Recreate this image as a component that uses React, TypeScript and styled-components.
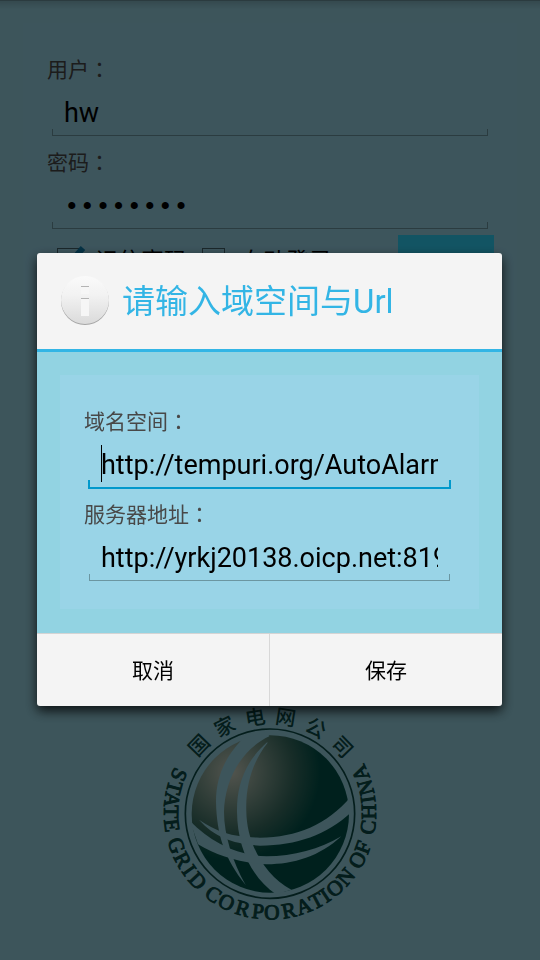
import React from "react";
import styled, { createGlobalStyle } from "styled-components";

const GlobalStyle = createGlobalStyle`
  * { box-sizing: border-box; }
  body {
    margin: 0;
    background: #98d4e3;
    font-family: Roboto, "Noto Sans CJK SC", sans-serif;
    color: #000;
  }
`;

const Page = styled.main`
  display: flex;
  flex-direction: column;
  min-height: 100vh;
  padding: 22px 23px 25px;
  border-top: 1px solid #6b939e;
  background: linear-gradient(#83b6c3, #98d4e3 8px);
`;

const Panel = styled.section`
  padding: 33px 24px 15px;
  background: #99d4e7;
`;

const Field = styled.div`
  margin-bottom: 12px;
`;

const Label = styled.label`
  display: block;
  padding-bottom: 4px;
  font-family: "Noto Sans CJK SC", sans-serif;
  font-size: 21px;
  line-height: 24px;
  color: #484848;
`;

const Colon = styled.span`
  font-family: "Noto Sans CJK TC", sans-serif;
`;

const InputBox = styled.div<{ $active?: boolean }>`
  position: relative;
  height: 53px;
  margin: 0 4px;
  &::after {
    content: "";
    position: absolute;
    inset: auto ${(p) => (p.$active ? "0 0 0" : "1px 1px 1px")};
    height: ${(p) => (p.$active ? 7 : 6)}px;
    border: solid ${(p) => (p.$active ? "#0099cc" : "#6b96a1")};
    border-width: ${(p) => (p.$active ? "0 2px 2px" : "0 1px 1px")};
    pointer-events: none;
  }
`;

const TextInput = styled.input`
  display: block;
  width: 100%;
  height: 100%;
  padding: 5px 13px 0;
  border: 0;
  outline: 0;
  background: transparent;
  color: #000;
  font-family: inherit;
  font-size: 27px;
  &[type="password"] {
    padding-top: 7px;
    font-family: "Liberation Mono", monospace;
    font-size: 26px;
  }
`;

const Caret = styled.span`
  position: absolute;
  left: 13px;
  top: 9px;
  width: 1px;
  height: 37px;
  background: #000;
`;

const Options = styled.div`
  display: flex;
  align-items: flex-start;
  height: 80px;
  margin-top: -7px;
  padding-left: 10px;
`;

const Option = styled.label`
  display: flex;
  align-items: center;
  gap: 15px;
  width: 145px;
  margin-top: 7px;
  font-family: "Noto Sans CJK SC", sans-serif;
  font-size: 23px;
  line-height: 34px;
  white-space: nowrap;
`;

const CheckSlot = styled.span`
  position: relative;
  display: block;
  width: 23px;
  height: 23px;
`;

const Check = styled.input`
  appearance: none;
  display: block;
  width: 23px;
  height: 23px;
  margin: 0;
  border: 1px solid #44626a;
`;

const Tick = styled.svg`
  position: absolute;
  left: 2px;
  top: -4px;
  pointer-events: none;
`;

const LoginButton = styled.button`
  width: 96px;
  height: 68px;
  margin-left: auto;
  margin-right: -1px;
  border: 0;
  background: #2fd2f7;
  color: #fff;
  font: inherit;
  font-size: 21px;
`;

const LogoArea = styled.div`
  display: flex;
  justify-content: center;
  margin-top: auto;
`;

const Scrim = styled.div`
  position: fixed;
  inset: 0;
  display: flex;
  align-items: center;
  padding: 0 38px 1px 37px;
  background: rgba(0, 0, 0, 0.6);
`;

const Dialog = styled.div`
  flex: 1;
  min-width: 0;
  overflow: hidden;
  border-radius: 3px;
  background: #f4f4f4;
  box-shadow: 0 5px 12px 0 rgba(0, 0, 0, 0.8);
`;

const DialogHeader = styled.header`
  display: flex;
  align-items: center;
  gap: 12px;
  height: 99px;
  padding-left: 23px;
  border-bottom: 3px solid #33b5e5;
`;

const Title = styled.h1`
  margin: 0;
  padding-top: 2px;
  font-size: 33px;
  font-weight: 400;
  line-height: 48px;
  color: #33b5e5;
`;

const DialogBody = styled.div`
  padding: 23px 23px 24px;
  background: #92d3e2;
`;

const Actions = styled.footer`
  display: flex;
  border-top: 1px solid #d4d4d4;
`;

const ActionButton = styled.button`
  flex: 1;
  height: 72px;
  padding: 0 0 2px;
  border: 0;
  background: transparent;
  color: #000;
  font-family: "Noto Sans CJK SC", sans-serif;
  font-size: 21px;
  & + & {
    border-left: 1px solid #d8d8d8;
  }
`;

type FieldProps = {
  id: string;
  label: string;
  value: string;
  type?: string;
  active?: boolean;
};

function TextField({ id, label, value, type = "text", active }: FieldProps) {
  return (
    <Field>
      <Label htmlFor={id}>
        {label}
        <Colon lang="zh-TW">{"\uFF1A"}</Colon>
      </Label>
      <InputBox $active={active}>
        <TextInput id={id} type={type} defaultValue={value} spellCheck={false} />
        {active && <Caret />}
      </InputBox>
    </Field>
  );
}

function InfoIcon() {
  return (
    <svg width="50" height="50" viewBox="0 0 50 50" aria-hidden="true">
      <defs>
        <linearGradient id="disc" x1="0" y1="0" x2="0" y2="1">
          <stop offset="0" stopColor="#fafafa" />
          <stop offset="0.4" stopColor="#f2f2f2" />
          <stop offset="1" stopColor="#dadada" />
        </linearGradient>
      </defs>
      <circle cx="25" cy="25" r="24" fill="#a4a4a4" />
      <circle cx="25" cy="24" r="24" fill="url(#disc)" />
      <path d="M21 10h8v8h-8zM21 22h8v18h-8z" fill="#f6f6f6" />
      <path d="M21 10h8v1h-8zM21 22h8v1h-8z" fill="#b4b4b4" />
    </svg>
  );
}

const HANZI = [
  { char: "国", x: 146, y: 150, turn: -46 },
  { char: "家", x: 224, y: 94, turn: -27 },
  { char: "电", x: 315, y: 66, turn: -9 },
  { char: "网", x: 407, y: 66, turn: 9 },
  { char: "公", x: 498, y: 98, turn: 28 },
  { char: "司", x: 578, y: 155, turn: 46 },
];

const MOTTO = "STATEGRIDCORPORATIONOFCHINA";
// Degrees along the ring for each letter, from the left through the bottom.
const MOTTO_ANGLES = [
  -23, -15, -8, -1, 7, 19, 28, 35, 43, 55, 64, 74, 83, 91, 101, 110, 118, 124, 131, 140, 152, 160, 172, 181, 188, 195,
  204,
];

function GridLogo() {
  return (
    <svg width="240" height="240" viewBox="0 0 720 720" role="img" aria-label="国家电网公司 State Grid Corporation of China">
      <defs>
        <radialGradient id="globe" gradientUnits="userSpaceOnUse" cx="245" cy="230" r="265">
          <stop offset="0" stopColor="#ccd2c2" />
          <stop offset="0.35" stopColor="#84a294" />
          <stop offset="0.7" stopColor="#3c7064" />
          <stop offset="1" stopColor="#00524a" />
        </radialGradient>
      </defs>
      <circle cx="360" cy="356" r="254" fill="none" stroke="#0a4a46" strokeWidth="5" />
      <circle cx="361" cy="357" r="236" fill="url(#globe)" />
      <g fill="#98d4e3">
        <path d="M275 134C222 190 198 250 198 320C200 420 224 490 287 570C248 500 222 420 222 350C224 260 270 165 358 124L350 110Z" />
        <path d="M352 141C285 200 260 270 261 350C262 450 300 545 378 598L424 584C340 540 290 440 289 350C286 270 308 200 352 145Z" />
        <path d="M147 374C200 410 250 427 330 428C440 427 530 390 602 306L604 352C530 420 440 452 330 452C250 446 195 428 147 374Z" />
        <path d="M120 378C180 440 260 482 350 484C430 484 510 462 574 424C510 484 430 508 350 508C270 504 200 482 144 448Z" />
      </g>
      {HANZI.map((h) => (
        <text
          key={h.char}
          transform={`translate(${h.x} ${h.y}) rotate(${h.turn})`}
          textAnchor="middle"
          y="23"
          fontSize="61"
          fontFamily="'Noto Sans CJK SC', sans-serif"
          fontWeight="500"
          fill="#0a4a46"
        >
          {h.char}
        </text>
      ))}
      {MOTTO_ANGLES.map((angle, i) => (
        <text
          key={angle}
          transform={`translate(360 355) rotate(${90 - angle})`}
          textAnchor="middle"
          y="318"
          fontSize="64"
          fontFamily="'Liberation Serif', serif"
          fill="#0a4a46"
          stroke="#0a4a46"
          strokeWidth="3"
        >
          {MOTTO[i]}
        </text>
      ))}
    </svg>
  );
}

export default function App() {
  return (
    <>
      <GlobalStyle />
      <Page>
        <Panel>
          <TextField id="user" label="用户" value="hw" />
          <TextField id="password" label="密码" value="12345678" type="password" />
          <Options>
            <Option>
              <CheckSlot>
                <Check type="checkbox" defaultChecked />
                <Tick width="30" height="26" viewBox="0 0 30 26">
                  <path d="M3 14l6 7L24 4" fill="none" stroke="#0d7fae" strokeWidth="6" />
                </Tick>
              </CheckSlot>
              记住密码
            </Option>
            <Option>
              <CheckSlot>
                <Check type="checkbox" />
              </CheckSlot>
              自动登录
            </Option>
            <LoginButton type="button">登录</LoginButton>
          </Options>
        </Panel>
        <LogoArea>
          <GridLogo />
        </LogoArea>
      </Page>
      <Scrim>
        <Dialog role="dialog" aria-modal="true" aria-labelledby="dialog-title">
          <DialogHeader>
            <InfoIcon />
            <Title id="dialog-title">请输入域空间与Url</Title>
          </DialogHeader>
          <DialogBody>
            <Panel>
              <TextField id="namespace" label="域名空间" value="http://tempuri.org/AutoAlarm" active />
              <TextField id="server" label="服务器地址" value="http://yrkj20138.oicp.net:8190" />
            </Panel>
          </DialogBody>
          <Actions>
            <ActionButton type="button">取消</ActionButton>
            <ActionButton type="button">保存</ActionButton>
          </Actions>
        </Dialog>
      </Scrim>
    </>
  );
}
